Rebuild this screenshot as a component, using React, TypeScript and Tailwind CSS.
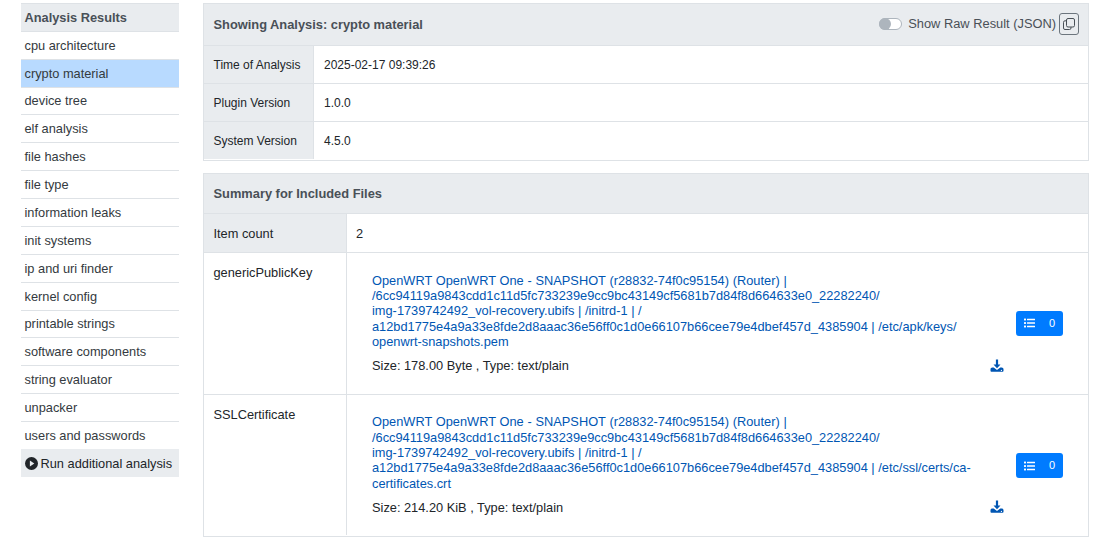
import React from "react";

const plugins = [
  "cpu architecture",
  "crypto material",
  "device tree",
  "elf analysis",
  "file hashes",
  "file type",
  "information leaks",
  "init systems",
  "ip and uri finder",
  "kernel config",
  "printable strings",
  "software components",
  "string evaluator",
  "unpacker",
  "users and passwords",
];

const files = [
  {
    name: "genericPublicKey",
    lines: [
      "OpenWRT OpenWRT One - SNAPSHOT (r28832-74f0c95154) (Router) |",
      "/6cc94119a9843cdd1c11d5fc733239e9cc9bc43149cf5681b7d84f8d664633e0_22282240/",
      "img-1739742492_vol-recovery.ubifs | /initrd-1 | /",
      "a12bd1775e4a9a33e8fde2d8aaac36e56ff0c1d0e66107b66cee79e4dbef457d_4385904 | /etc/apk/keys/",
      "openwrt-snapshots.pem",
    ],
    size: "Size: 178.00 Byte , Type: text/plain",
  },
  {
    name: "SSLCertificate",
    lines: [
      "OpenWRT OpenWRT One - SNAPSHOT (r28832-74f0c95154) (Router) |",
      "/6cc94119a9843cdd1c11d5fc733239e9cc9bc43149cf5681b7d84f8d664633e0_22282240/",
      "img-1739742492_vol-recovery.ubifs | /initrd-1 | /",
      "a12bd1775e4a9a33e8fde2d8aaac36e56ff0c1d0e66107b66cee79e4dbef457d_4385904 | /etc/ssl/certs/ca-",
      "certificates.crt",
    ],
    size: "Size: 214.20 KiB , Type: text/plain",
  },
];

const meta = [
  ["Time of Analysis", "2025-02-17 09:39:26"],
  ["Plugin Version", "1.0.0"],
  ["System Version", "4.5.0"],
];

function DownloadIcon() {
  return (
    <svg viewBox="0 0 14 14" className="w-[14px] h-[14px] text-[#0056b3]" fill="currentColor">
      <path d="M5.9 0.5h2.2v5h2.4L7 9.3 3.5 5.5h2.4z" />
      <path d="M0.5 10.2c0-1 .8-1.8 1.8-1.8h1.4L7 11l3.3-2.6h1.4c1 0 1.8.8 1.8 1.8v1.5c0 .6-.5 1.1-1.1 1.1H1.6c-.6 0-1.1-.5-1.1-1.1z" />
      <circle cx="11.4" cy="11.4" r="0.6" fill="#ffffff" />
    </svg>
  );
}

function CopyIcon() {
  return (
    <svg viewBox="0 0 12 12" className="w-[12px] h-[12px]" fill="none" stroke="currentColor" strokeWidth="1">
      <rect x="3.5" y="0.5" width="8" height="8.5" rx="1.5" />
      <path d="M3.5 2.8H2A1.5 1.5 0 0 0 .5 4.3v5.7A1.5 1.5 0 0 0 2 11.5h4.5A1.5 1.5 0 0 0 8 10V9" />
    </svg>
  );
}

function ListIcon() {
  return (
    <svg viewBox="0 0 11 10" className="w-[11px] h-[10px]" fill="currentColor">
      <rect x="0" y="0.5" width="2" height="2" rx="0.4" />
      <rect x="0" y="4" width="2" height="2" rx="0.4" />
      <rect x="0" y="7.5" width="2" height="2" rx="0.4" />
      <rect x="3" y="0.8" width="8" height="1.4" rx="0.3" />
      <rect x="3" y="4.3" width="8" height="1.4" rx="0.3" />
      <rect x="3" y="7.8" width="8" height="1.4" rx="0.3" />
    </svg>
  );
}

function PlayIcon() {
  return (
    <svg viewBox="0 0 13 13" className="w-[13px] h-[13px] shrink-0">
      <circle cx="6.5" cy="6.5" r="6.5" fill="#212529" />
      <path d="M4.9 3.6l4.4 2.9-4.4 2.9z" fill="#e9ecef" />
    </svg>
  );
}

function Sidebar() {
  return (
    <div className="w-[158px] shrink-0 text-[12.8px]">
      <div className="h-[27.8px] flex items-center px-[3.5px] bg-[#e9ecef] text-[#495057] font-bold border-t border-[#dee2e6]">
        Analysis Results
      </div>
      {plugins.map((p) => (
        <div
          key={p}
          className={`h-[27.88px] flex items-center px-[3.5px] border-t border-[#dee2e6] text-[#343a40] ${
            p === "crypto material" ? "bg-[#b8daff] text-[#1b3a5c]" : ""
          }`}
        >
          {p}
        </div>
      ))}
      <div className="h-[28px] pt-[1px] flex items-center gap-[3px] px-[3.5px] bg-[#e9ecef] text-[#212529]">
        <PlayIcon />
        Run additional analysis
      </div>
    </div>
  );
}

function AnalysisTable() {
  return (
    <div className="border border-[#dee2e6] pb-[1px]">
      <div className="h-[41px] flex items-center justify-between pl-[9.5px] pr-[9px] bg-[#e9ecef] text-[#495057]">
        <span className="text-[12.85px] font-bold">Showing Analysis: crypto material</span>
        <div className="flex items-center pb-[2px]">
          <span className="relative w-[23px] h-[12px] rounded-full bg-white border border-[#adb5bd] mr-[6px]">
            <span className="absolute left-[-1px] top-[-1px] w-[12px] h-[12px] rounded-full bg-[#adb5bd]" />
          </span>
          <span className="text-[12.85px] mr-[3px]">Show Raw Result (JSON)</span>
          <span className="w-[20px] h-[22px] flex items-center justify-center border border-[#6c757d] rounded-[3px] text-[#495057]">
            <CopyIcon />
          </span>
        </div>
      </div>
      {meta.map(([k, v]) => (
        <div key={k} className="h-[38px] flex border-t border-[#dee2e6] text-[12px] text-[#212529]">
          <div className="w-[110px] flex items-center pl-[9.5px] bg-[#e9ecef] border-r border-[#dee2e6]">{k}</div>
          <div className="flex items-center pl-[10px]">{v}</div>
        </div>
      ))}
    </div>
  );
}

function SummaryTable() {
  return (
    <div className="mt-[12px] border border-[#dee2e6] pb-[0.8px] text-[12.8px] text-[#212529]">
      <div className="h-[39px] pt-[1px] flex items-center pl-[9.5px] bg-[#e9ecef] text-[#495057] font-bold text-[12.85px]">
        Summary for Included Files
      </div>
      <div className="h-[39px] flex border-t border-[#dee2e6]">
        <div className="w-[143px] flex items-center pl-[9.5px] pt-[1px] bg-[#e9ecef] border-r border-[#dee2e6]">Item count</div>
        <div className="flex items-center pl-[9px] pt-[1px]">2</div>
      </div>
      {files.map((f, idx) => (
        <div key={f.name} className="h-[141.6px] flex border-t border-[#dee2e6]">
          <div
            className={`w-[143px] pl-[9.5px] border-r border-[#dee2e6] leading-[15px] ${
              idx === 1 ? "pt-[12.6px]" : "pt-[11.8px]"
            }`}
          >
            {f.name}
          </div>
          <div className="flex-1 flex pl-[25px] pt-[19.8px]">
            <div className="w-[644px] shrink-0">
              <div className="text-[#0056b3] leading-[15.3px] whitespace-nowrap">
                {f.lines.map((l, i) => (
                  <div key={l} className={i === 0 ? "[word-spacing:0.22px]" : ""}>
                    {l}
                  </div>
                ))}
              </div>
              <div className="mt-[9px] leading-[15px] flex justify-between items-center">
                <span>{f.size}</span>
                <span className="mr-[12px] ml-auto">
                  <DownloadIcon />
                </span>
              </div>
            </div>
            <div className={`self-start ${idx === 1 ? "mt-[38.8px]" : "mt-[38px]"}`}>
              <div className="w-[47px] h-[25px] flex items-center bg-[#007bff] text-white rounded-[3px] pl-[8px] text-[11px]">
                <ListIcon />
                <span className="ml-[14px]">0</span>
              </div>
            </div>
          </div>
        </div>
      ))}
    </div>
  );
}

export default function App() {
  return (
    <div className="flex h-[548px] overflow-hidden bg-white pl-[21px] pt-[3px] pr-[9px] font-['Liberation_Sans',Arial,sans-serif]">
      <Sidebar />
      <div className="ml-[24px] flex-1 min-w-0">
        <AnalysisTable />
        <SummaryTable />
      </div>
    </div>
  );
}
